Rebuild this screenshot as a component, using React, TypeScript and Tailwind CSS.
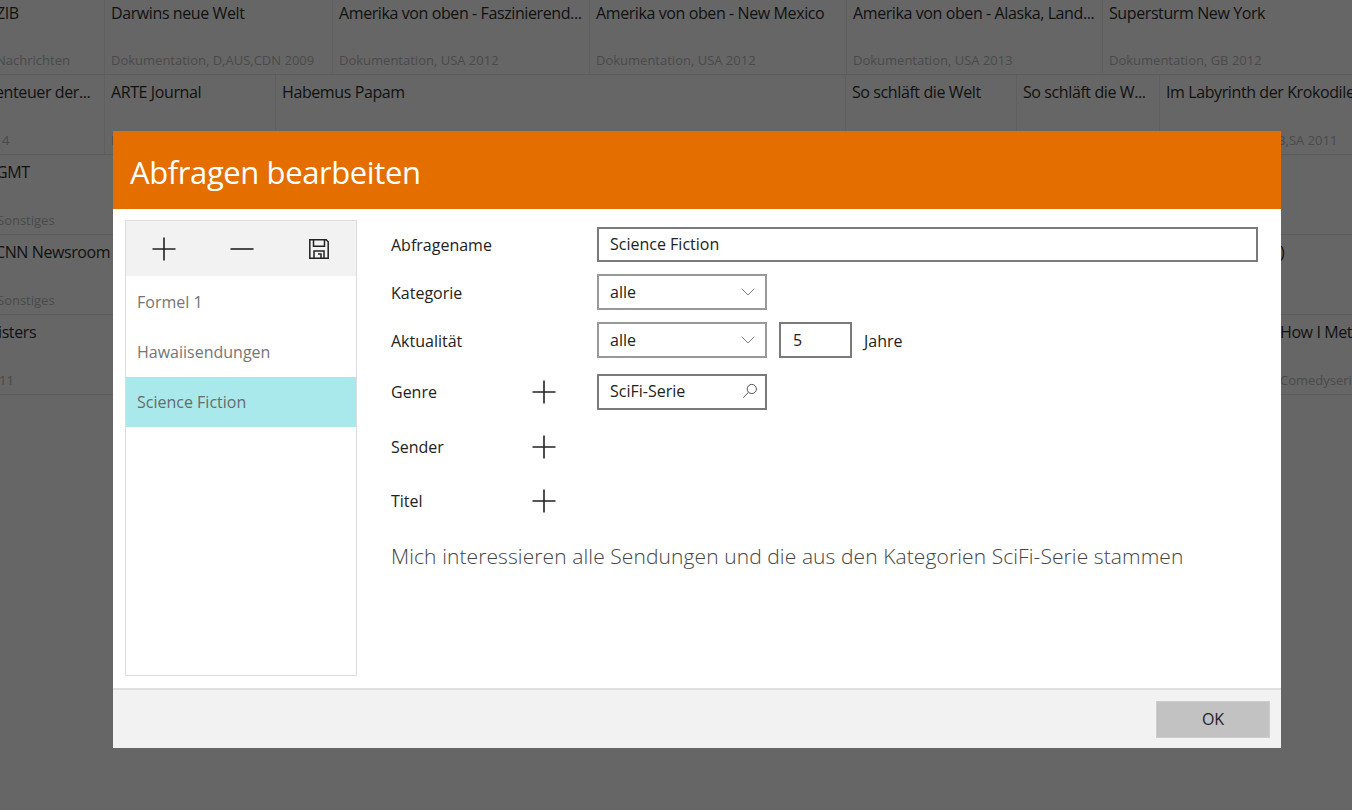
type Cell = { w: string; title: string; sub: string; ind: string; si?: string };

const rows: Cell[][] = [
  [
    { w: "w-[105px]", title: "ZIB", sub: "Nachrichten", ind: "-ml-[10px]" },
    { w: "w-[228px]", title: "Darwins neue Welt", sub: "Dokumentation, D,AUS,CDN 2009", ind: "" },
    { w: "w-[257px]", title: "Amerika von oben - Faszinierend...", sub: "Dokumentation, USA 2012", ind: "" },
    { w: "w-[257px]", title: "Amerika von oben - New Mexico", sub: "Dokumentation, USA 2012", ind: "" },
    { w: "w-[256px]", title: "Amerika von oben - Alaska, Land...", sub: "Dokumentation, USA 2013", ind: "" },
    { w: "w-[249px]", title: "Supersturm New York", sub: "Dokumentation, GB 2012", ind: "" },
  ],
  [
    { w: "w-[105px]", title: "enteuer der...", sub: "4", ind: "-ml-[11px]", si: "-ml-[4px]" },
    { w: "w-[171px]", title: "ARTE Journal", sub: "Magazin", ind: "" },
    { w: "w-[570px]", title: "Habemus Papam", sub: "", ind: "" },
    { w: "w-[171px]", title: "So schläft die Welt", sub: "", ind: "" },
    { w: "w-[143px]", title: "So schläft die W...", sub: "", ind: "" },
    { w: "w-[192px]", title: "Im Labyrinth der Krokodile", sub: "Dokumentation, GB,SA 2011", ind: "" },
  ],
  [{ w: "w-[1352px]", title: "GMT", sub: "Sonstiges", ind: "-ml-[10px]", si: "-ml-[9px]" }],
  [
    { w: "w-[1274px]", title: "CNN Newsroom", sub: "Sonstiges", ind: "-ml-[11px]", si: "-ml-[9px]" },
    { w: "w-[78px]", title: ")", sub: "", ind: "" },
  ],
  [
    { w: "w-[1274px]", title: "isters", sub: "11", ind: "-ml-[8px]", si: "-ml-[7px]" },
    { w: "w-[78px]", title: "How I Met", sub: "Comedyserie", ind: "" },
  ],
];

function Plus({ size = 24 }: { size?: number }) {
  return (
    <svg width={size} height={size} viewBox="0 0 24 24" fill="none" stroke="#222" strokeWidth="1.6">
      <path d="M0.5 12H23.5M12 0.5V23.5" />
    </svg>
  );
}

function Chevron() {
  return (
    <svg width="14" height="8" viewBox="0 0 14 8" fill="none" stroke="#808080" strokeWidth="1">
      <path d="M0.7 0.7L7 7L13.3 0.7" />
    </svg>
  );
}

function Combo() {
  return (
    <div className="flex h-[36px] w-[170px] items-center justify-between border-2 border-[#999] pl-[11px] pr-[10px] text-[16px] text-[#222]">
      <span>alle</span>
      <Chevron />
    </div>
  );
}

export default function App() {
  return (
    <div className="relative h-[810px] w-[1352px] overflow-hidden bg-[#666] font-['Open_Sans',sans-serif]">
      {rows.map((row, i) => (
        <div key={i} className={`flex border-b border-[#5c5c5c] ${i === 0 ? "h-[75px]" : "h-[80px]"}`}>
          {row.map((c, j) => (
            <div key={j} className={`flex shrink-0 flex-col justify-between overflow-hidden border-r border-[#5f5f5f] pb-[4px] pl-[6px] last:border-r-0 ${i === 0 ? "pt-[1px]" : "pt-[5px]"} ${c.w}`}>
              <div className={`whitespace-nowrap text-[16px] tracking-[-0.4px] text-[#111] ${c.ind}`}>{c.title}</div>
              <div className={`whitespace-nowrap text-[13px] text-[#4a4a4a] ${c.si ?? c.ind}`}>{c.sub}</div>
            </div>
          ))}
        </div>
      ))}

      <div className="absolute left-[113px] top-[131px] flex h-[617px] w-[1168px] flex-col bg-white">
        <div className="flex h-[78px] items-center bg-[#e46e00] pl-[17px] pt-[4px] text-[31px] tracking-[-0.4px] text-white">
          Abfragen bearbeiten
        </div>
        <div className="flex flex-1 pl-[12px] pt-[11px]">
          <div className="h-[456px] w-[232px] border border-[#dcdcdc]">
            <div className="flex h-[55px] items-center justify-between bg-[#f2f2f2] pl-[26px] pr-[26px]">
              <Plus />
              <svg width="24" height="24" viewBox="0 0 24 24" fill="none" stroke="#222" strokeWidth="1.6" className="-ml-[1px]">
                <path d="M0.5 12H23.5" />
              </svg>
              <svg width="22" height="22" viewBox="0 0 22 22" fill="none" stroke="#222" strokeWidth="1.5">
                <path d="M1.8 1.8H18.2L20.2 3.8V20.2H1.8Z" />
                <path d="M5.5 2V8.2H16.5V2" />
                <path d="M6 20V13H16V20" />
                <path d="M10 16H13V20" />
              </svg>
            </div>
            <div className="flex h-[51px] items-center pl-[11px] text-[16px] text-[#757575]">Formel 1</div>
            <div className="flex h-[50px] items-center pl-[11px] text-[16px] text-[#757575]">Hawaiisendungen</div>
            <div className="flex h-[50px] items-center bg-[#a9e9eb] pl-[11px] text-[16px] text-[#6a6a6a]">Science Fiction</div>
          </div>

          <div className="ml-[34px] flex w-[867px] flex-col pt-[7px] text-[16px] text-[#222]">
            <div className="flex h-[35px] items-center">
              <div className="w-[206px]">Abfragename</div>
              <div className="flex h-[35px] flex-1 items-center border-2 border-[#7a7a7a] pb-[2px] pl-[11px]">Science Fiction</div>
            </div>
            <div className="mt-[12px] flex h-[36px] items-center">
              <div className="w-[206px] pt-[2px]">Kategorie</div>
              <Combo />
            </div>
            <div className="mt-[12px] flex h-[36px] items-center">
              <div className="w-[206px] pt-[2px]">Aktualität</div>
              <Combo />
              <div className="ml-[12px] flex h-[36px] w-[73px] items-center border-2 border-[#7a7a7a] pl-[12px]">5</div>
              <div className="ml-[12px] pt-[2px]">Jahre</div>
            </div>
            <div className="mt-[16px] flex h-[36px] items-center">
              <div className="w-[141px]">Genre</div>
              <div className="w-[65px]"><Plus /></div>
              <div className="flex h-[36px] w-[170px] items-center justify-between border-2 border-[#7a7a7a] pb-[2px] pl-[11px] pr-[7px]">
                <span>SciFi-Serie</span>
                <svg width="16" height="16" viewBox="0 0 16 16" fill="none" stroke="#555" strokeWidth="1">
                  <circle cx="9.8" cy="6" r="4.6" />
                  <path d="M6.5 9.3L1.2 14.6" />
                </svg>
              </div>
            </div>
            <div className="mt-[19px] flex h-[36px] items-center">
              <div className="w-[141px]">Sender</div>
              <Plus />
            </div>
            <div className="mt-[18px] flex h-[36px] items-center">
              <div className="w-[141px]">Titel</div>
              <Plus />
            </div>
            <div className="mt-[22px] whitespace-nowrap text-[21px] font-light tracking-[0.09px] text-[#444]">
              Mich interessieren alle Sendungen und die aus den Kategorien SciFi-Serie stammen
            </div>
          </div>
        </div>
        <div className="flex h-[60px] items-center justify-end border-t-2 border-[#dfdfdf] bg-[#f2f2f2] pr-[11px]">
          <div className="flex h-[37px] w-[114px] items-center justify-center border border-[#cdcdcd] bg-[#c2c2c2] text-[16px] text-[#222]">
            OK
          </div>
        </div>
      </div>
    </div>
  );
}
